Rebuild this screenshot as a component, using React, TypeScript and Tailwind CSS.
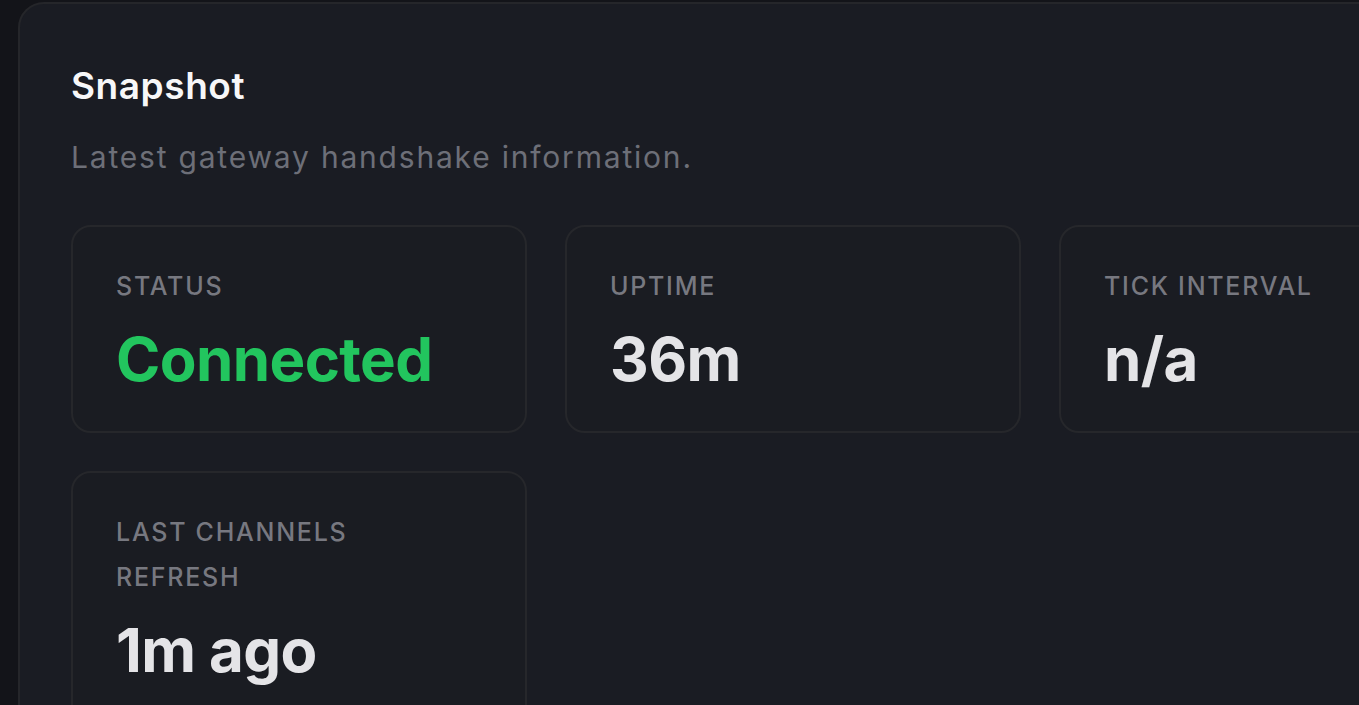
const stats = [
  { label: 'Status', value: 'Connected', tone: 'text-[#22c55e]' },
  { label: 'Uptime', value: '36m', tone: 'text-[#e4e4e7]' },
  { label: 'Tick Interval', value: 'n/a', tone: 'text-[#e4e4e7]' },
  { label: 'Last Channels Refresh', value: '1m ago', tone: 'text-[#e4e4e7]' },
];

function StatCard({ label, value, tone }: { label: string; value: string; tone: string }) {
  return (
    <div className="rounded-[20px] border-2 border-[#26272b] bg-[#1a1c22] px-[43px] pt-[37px] pb-[37px]">
      <div className="max-w-[330px] text-[25px] leading-[45px] font-medium uppercase tracking-[0.07em] text-[#777880]">
        {label}
      </div>
      <div className={`mt-[15px] text-[60px] leading-[70px] font-bold tracking-[-0.01em] ${tone}`}>{value}</div>
    </div>
  );
}

export default function App() {
  return (
    <div
      className="h-[705px] w-[1359px] overflow-hidden bg-[#131419] pl-[18px] pt-[2px]"
      style={{ fontFamily: 'Inter, "Noto Sans", sans-serif' }}
    >
      <div className="w-[1560px] rounded-[26px] border-2 border-[#25262a] bg-[#1a1c23] px-[51px] pt-[57px] pb-[60px]">
        <h2 className="text-[37px] leading-[50px] font-semibold tracking-[0.015em] text-[#f7f7f8]">Snapshot</h2>
        <p className="mt-[26px] text-[30px] leading-[40px] tracking-[0.06em] text-[#6d6f78]">
          Latest gateway handshake information.
        </p>
        <div className="mt-[48px] grid grid-cols-[repeat(3,456px)] gap-[38px]">
          {stats.map((s) => (
            <StatCard key={s.label} {...s} />
          ))}
        </div>
      </div>
    </div>
  );
}
